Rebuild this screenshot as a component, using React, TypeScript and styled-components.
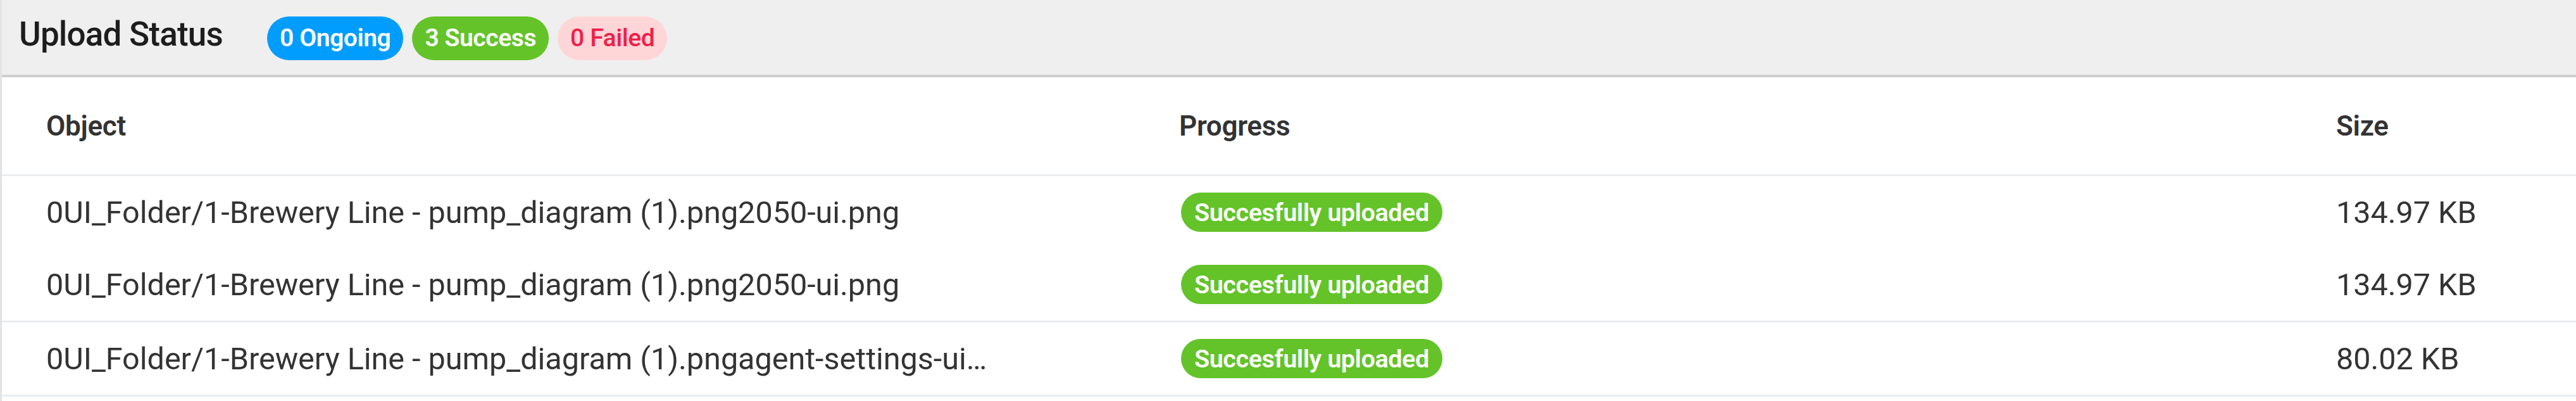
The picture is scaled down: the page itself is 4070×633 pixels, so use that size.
import styled, { createGlobalStyle } from "styled-components";

const GlobalStyle = createGlobalStyle`
    html, body {
        margin: 0;
        padding: 0;
        background: #ffffff;
    }
    body {
        font-family: Roboto, "Noto Sans", "Liberation Sans", sans-serif;
        color: #333333;
    }
`;

const Page = styled.div`
    width: 4070px;
    height: 633px;
    box-sizing: border-box;
    border-left: 3px solid #e3e3e3;
    background: #ffffff;
    overflow: hidden;
`;

const Header = styled.header`
    height: 118px;
    background: #efefef;
    border-bottom: 4px solid #cdcdcd;
    display: flex;
    align-items: center;
    padding-left: 27px;
`;

const Title = styled.h1`
    margin: 0 70px 10px 0;
    font-size: 53px;
    font-weight: 500;
    letter-spacing: -0.8px;
    color: #1d1d1d;
`;

const Counters = styled.div`
    display: flex;
    align-items: center;
    gap: 14px;
    margin-top: 2px;
`;

type Tone = "info" | "success" | "danger";

const tones: Record<Tone, { bg: string; fg: string; weight: number }> = {
    info: { bg: "#009dff", fg: "#ffffff", weight: 600 },
    success: { bg: "#63c328", fg: "#ffffff", weight: 600 },
    danger: { bg: "#ffd6d7", fg: "#f0204a", weight: 500 },
};

const Pill = styled.span<{ $tone: Tone }>`
    display: inline-flex;
    align-items: center;
    height: 69px;
    padding: 0 20px;
    border-radius: 35px;
    font-size: 39px;
    letter-spacing: -0.4px;
    white-space: nowrap;
    background: ${(p) => tones[p.$tone].bg};
    color: ${(p) => tones[p.$tone].fg};
    font-weight: ${(p) => tones[p.$tone].weight};
`;

const Row = styled.div<{ $divider?: boolean; $height: number }>`
    display: grid;
    grid-template-columns: 1790px 1828px 1fr;
    align-items: center;
    height: ${(p) => p.$height}px;
    padding-left: 70px;
    border-bottom: ${(p) => (p.$divider ? "3px solid #e9edf0" : "none")};
`;

const HeadCell = styled.div`
    font-size: 44px;
    font-weight: 600;
    color: #333333;
    letter-spacing: -0.3px;
`;

const Cell = styled.div`
    font-size: 48.5px;
    font-weight: 400;
    color: #333333;
    white-space: nowrap;
`;

const StatusBadge = styled.span`
    display: inline-flex;
    align-items: center;
    height: 62px;
    padding: 0 21px;
    margin-left: 3px;
    border-radius: 31px;
    background: #63c328;
    color: #ffffff;
    font-size: 39.5px;
    font-weight: 600;
    letter-spacing: -0.4px;
    white-space: nowrap;
`;

const uploads = [
    {
        name: "0UI_Folder/1-Brewery Line - pump_diagram (1).png2050-ui.png",
        size: "134.97 KB",
        divider: false,
    },
    {
        name: "0UI_Folder/1-Brewery Line - pump_diagram (1).png2050-ui.png",
        size: "134.97 KB",
        divider: true,
    },
    {
        name: "0UI_Folder/1-Brewery Line - pump_diagram (1).pngagent-settings-ui…",
        size: "80.02 KB",
        divider: true,
    },
];

export default function App() {
    return (
        <Page>
            <GlobalStyle />
            <Header>
                <Title>Upload Status</Title>
                <Counters>
                    <Pill $tone="info">0 Ongoing</Pill>
                    <Pill $tone="success">3 Success</Pill>
                    <Pill $tone="danger">0 Failed</Pill>
                </Counters>
            </Header>

            <Row $divider $height={153}>
                <HeadCell>Object</HeadCell>
                <HeadCell>Progress</HeadCell>
                <HeadCell>Size</HeadCell>
            </Row>

            {uploads.map((u, i) => (
                <Row key={i} $divider={u.divider} $height={114}>
                    <Cell>{u.name}</Cell>
                    <div>
                        <StatusBadge>Succesfully uploaded</StatusBadge>
                    </div>
                    <Cell>{u.size}</Cell>
                </Row>
            ))}
        </Page>
    );
}
